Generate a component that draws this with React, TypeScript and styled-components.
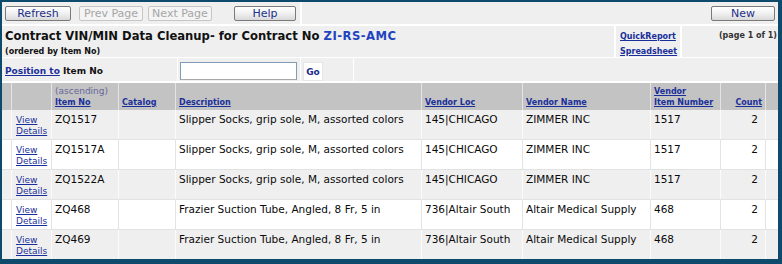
import React from "react";
import styled, { createGlobalStyle } from "styled-components";

const GlobalStyle = createGlobalStyle`
  html, body { margin: 0; padding: 0; background: #ffffff; }
  body { font-family: "DejaVu Sans", Verdana, sans-serif; }
`;

const FONT = `"DejaVu Sans", Verdana, sans-serif`;
const COLS = "10px 40px 67px 57px 246px 101px 128px 70px 45px 1fr";

const Frame = styled.div`
  box-sizing: border-box;
  width: 782px;
  height: 264px;
  border: solid #0e4a6c;
  border-width: 2px 4px 5px 2px;
  background: #ffffff;
  display: flex;
  flex-direction: column;
  gap: 2px;
  overflow: hidden;
  font-family: ${FONT};
`;

const Band = styled.div<{ $cols: string; $h: number; $gap?: number }>`
  display: grid;
  grid-template-columns: ${p => p.$cols};
  column-gap: ${p => p.$gap ?? 2}px;
  height: ${p => p.$h}px;
  flex: none;
`;

const ToolCell = styled.div<{ $right?: boolean }>`
  background: #efefef;
  display: flex;
  align-items: center;
  justify-content: ${p => (p.$right ? "flex-end" : "flex-start")};
  padding: 0 3px;
`;

const Button = styled.button<{ $w: number; $ml?: number }>`
  box-sizing: border-box;
  width: ${p => p.$w}px;
  height: 15px;
  margin-left: ${p => p.$ml ?? 0}px;
  padding: 0;
  border: 1px solid ${p => (p.disabled ? "#c6c6c6" : "#7a7a7a")};
  border-radius: 2px;
  background: ${p =>
    p.disabled ? "#f4f4f4" : "linear-gradient(#ffffff, #f2f2f2 45%, #d9d9d9)"};
  color: ${p => (p.disabled ? "#a6a6a6" : "#1d2e88")};
  font: 11px/13px ${FONT};
`;

const TitleCell = styled.div`
  background: #efefef;
  padding: 3px 3px 0;
`;

const Title = styled.div`
  font-size: 11.6px;
  line-height: 14px;
  font-weight: bold;
  color: #111111;
  white-space: nowrap;
`;

const Code = styled.span`
  color: #1f44c0;
  letter-spacing: 0.5px;
`;

const SubTitle = styled.div`
  font-size: 8px;
  line-height: 11px;
  font-weight: bold;
  color: #111111;
  margin-top: 3px;
`;

const LinksCell = styled.div`
  background: #efefef;
  display: flex;
  flex-direction: column;
  padding: 5px 0 0 4px;
  gap: 4px;
`;

const SmallLink = styled.a`
  font-size: 8px;
  line-height: 11px;
  font-weight: bold;
  color: #1a2f9a;
  text-decoration: underline;
`;

const PageCell = styled.div`
  background: #efefef;
  text-align: right;
  padding: 4px 1px 0 0;
  font-size: 8px;
  line-height: 11px;
  font-weight: bold;
  color: #333333;
`;

const PosCell = styled.div`
  background: #efefef;
`;

const PosLabel = styled.div`
  font-size: 9px;
  line-height: 11px;
  font-weight: bold;
  color: #111111;
  padding: 8px 0 0 3px;
`;

const PosLink = styled.a`
  color: #1a2f9a;
  text-decoration: underline;
`;

const Input = styled.input`
  box-sizing: border-box;
  width: 117px;
  height: 18px;
  margin: 4px 0 0 2px;
  border: 1px solid #7f9db9;
  border-bottom-color: #a8a8a8;
  background: #ffffff;
  padding: 0 2px;
  font: 11px ${FONT};
  outline: none;
`;

const GoBox = styled.div`
  box-sizing: border-box;
  width: 20px;
  height: 19px;
  margin: 4px 0 0 2px;
  background: #ffffff;
  border: 1px solid #e6e6e6;
  display: flex;
  align-items: center;
  justify-content: center;
  font-size: 9px;
  font-weight: bold;
  color: #1d2b8c;
`;

const HeadRow = styled.div`
  display: grid;
  grid-template-columns: ${COLS};
  height: 27px;
  flex: none;
  background: #c3c3c3;
`;

const HeadCell = styled.div<{ $right?: boolean }>`
  box-sizing: border-box;
  border-right: 1px solid #e4e4e4;
  display: flex;
  flex-direction: column;
  justify-content: flex-end;
  align-items: ${p => (p.$right ? "flex-end" : "flex-start")};
  padding: 0 3px 2px;
  &:last-child { border-right: none; }
`;

const SortNote = styled.span`
  font-size: 9px;
  line-height: 11px;
  color: #66669a;
`;

const HeadLink = styled.a`
  font-size: 8px;
  line-height: 11px;
  font-weight: bold;
  color: #1a2f9a;
  text-decoration: underline;
`;

const DataRow = styled.div<{ $alt: boolean }>`
  box-sizing: border-box;
  display: grid;
  grid-template-columns: ${COLS};
  height: 30px;
  flex: none;
  background: ${p => (p.$alt ? "#ffffff" : "#efefef")};
  border-bottom: 1px solid #e2e2e2;
  --line: ${p => (p.$alt ? "#e4e4e4" : "#fbfbfb")};
`;

const DataCell = styled.div<{ $right?: boolean }>`
  box-sizing: border-box;
  border-right: 1px solid var(--line);
  padding: ${p => (p.$right ? "3px 7px 0 3px" : "3px 3px 0")};
  text-align: ${p => (p.$right ? "right" : "left")};
  font-size: 10.5px;
  line-height: 13px;
  color: #0a0a0a;
  white-space: nowrap;
  overflow: hidden;
  &:last-child { border-right: none; }
`;

const DetailLink = styled.a`
  display: block;
  padding: 2px 0 0 1px;
  font-size: 9px;
  line-height: 11px;
  color: #1a2f9a;
  text-decoration: underline;
`;

type Row = {
  item: string;
  desc: string;
  loc: string;
  vendor: string;
  vItem: string;
  count: number;
};

const rows: Row[] = [
  { item: "ZQ1517", desc: "Slipper Socks, grip sole, M, assorted colors", loc: "145|CHICAGO", vendor: "ZIMMER INC", vItem: "1517", count: 2 },
  { item: "ZQ1517A", desc: "Slipper Socks, grip sole, M, assorted colors", loc: "145|CHICAGO", vendor: "ZIMMER INC", vItem: "1517", count: 2 },
  { item: "ZQ1522A", desc: "Slipper Socks, grip sole, M, assorted colors", loc: "145|CHICAGO", vendor: "ZIMMER INC", vItem: "1517", count: 2 },
  { item: "ZQ468", desc: "Frazier Suction Tube, Angled, 8 Fr, 5 in", loc: "736|Altair South", vendor: "Altair Medical Supply", vItem: "468", count: 2 },
  { item: "ZQ469", desc: "Frazier Suction Tube, Angled, 8 Fr, 5 in", loc: "736|Altair South", vendor: "Altair Medical Supply", vItem: "468", count: 2 },
];

export default function App() {
  return (
    <>
      <GlobalStyle />
      <Frame>
        <Band $cols="298px 1fr" $h={22}>
          <ToolCell>
            <Button $w={66}>Refresh</Button>
            <Button $w={64} $ml={8} disabled>Prev Page</Button>
            <Button $w={64} $ml={5} disabled>Next Page</Button>
            <Button $w={62} $ml={22}>Help</Button>
          </ToolCell>
          <ToolCell $right>
            <Button $w={64}>New</Button>
          </ToolCell>
        </Band>

        <Band $cols="612px 64px 1fr" $h={30}>
          <TitleCell>
            <Title>
              Contract VIN/MIN Data Cleanup- for Contract No <Code>ZI-RS-AMC</Code>
            </Title>
            <SubTitle>(ordered by Item No)</SubTitle>
          </TitleCell>
          <LinksCell>
            <SmallLink>QuickReport</SmallLink>
            <SmallLink>Spreadsheet</SmallLink>
          </LinksCell>
          <PageCell>(page 1 of 1)</PageCell>
        </Band>

        <Band $cols="175px 122px 52px 1fr" $h={23} $gap={1}>
          <PosCell>
            <PosLabel>
              <PosLink>Position to</PosLink> Item No
            </PosLabel>
          </PosCell>
          <PosCell>
            <Input type="text" />
          </PosCell>
          <PosCell>
            <GoBox>Go</GoBox>
          </PosCell>
          <PosCell />
        </Band>

        <div>
          <HeadRow>
            <HeadCell />
            <HeadCell />
            <HeadCell>
              <SortNote>(ascending)</SortNote>
              <HeadLink>Item No</HeadLink>
            </HeadCell>
            <HeadCell>
              <HeadLink>Catalog</HeadLink>
            </HeadCell>
            <HeadCell>
              <HeadLink>Description</HeadLink>
            </HeadCell>
            <HeadCell>
              <HeadLink>Vendor Loc</HeadLink>
            </HeadCell>
            <HeadCell>
              <HeadLink>Vendor Name</HeadLink>
            </HeadCell>
            <HeadCell>
              <HeadLink>Vendor</HeadLink>
              <HeadLink>Item Number</HeadLink>
            </HeadCell>
            <HeadCell $right>
              <HeadLink>Count</HeadLink>
            </HeadCell>
            <HeadCell />
          </HeadRow>

          {rows.map((r, i) => (
            <DataRow key={r.item} $alt={i % 2 === 1}>
              <DataCell />
              <DataCell>
                <DetailLink>
                  View
                  <br />
                  Details
                </DetailLink>
              </DataCell>
              <DataCell>{r.item}</DataCell>
              <DataCell />
              <DataCell>{r.desc}</DataCell>
              <DataCell>{r.loc}</DataCell>
              <DataCell>{r.vendor}</DataCell>
              <DataCell>{r.vItem}</DataCell>
              <DataCell $right>{r.count}</DataCell>
              <DataCell />
            </DataRow>
          ))}
        </div>
      </Frame>
    </>
  );
}
